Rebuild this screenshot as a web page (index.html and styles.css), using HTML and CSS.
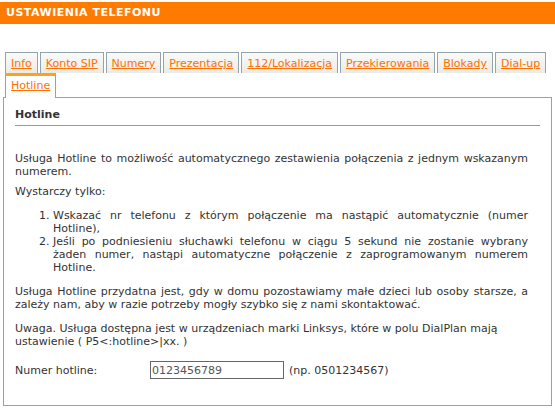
FILE: index.html
```html
<!DOCTYPE html>
<html lang="pl">

<head>
    <meta charset="utf-8">
    <title>Ustawienia telefonu</title>
    <link rel="stylesheet" href="styles.css">
</head>

<body>
    <header class="naglowek">USTAWIENIA TELEFONU</header>

    <nav class="zakladki">
        <a href="#" class="zakladka">Info</a>
        <a href="#" class="zakladka">Konto SIP</a>
        <a href="#" class="zakladka">Numery</a>
        <a href="#" class="zakladka">Prezentacja</a>
        <a href="#" class="zakladka">112/Lokalizacja</a>
        <a href="#" class="zakladka">Przekierowania</a>
        <a href="#" class="zakladka">Blokady</a>
        <a href="#" class="zakladka">Dial-up</a>
        <a href="#" class="zakladka aktywna">Hotline</a>
    </nav>

    <section class="panel">
        <h2 class="tytul">Hotline</h2>
        <div class="tresc">
            <p class="justuj wstep">Usługa Hotline to możliwość automatycznego zestawienia połączenia z jednym wskazanym numerem.</p>
            <p>Wystarczy tylko:</p>
            <ol class="kroki">
                <li>Wskazać nr telefonu z którym połączenie ma nastąpić automatycznie (numer Hotline),</li>
                <li>Jeśli po podniesieniu słuchawki telefonu w ciągu 5 sekund nie zostanie wybrany żaden numer, nastąpi automatyczne połączenie z zaprogramowanym numerem Hotline.</li>
            </ol>
            <p class="justuj">Usługa Hotline przydatna jest, gdy w domu pozostawiamy małe dzieci lub osoby starsze, a zależy nam, aby w razie potrzeby mogły szybko się z nami skontaktować.</p>
            <p>Uwaga. Usługa dostępna jest w urządzeniach marki Linksys, które w polu DialPlan mają ustawienie ( P5&lt;:hotline&gt;|xx. )</p>
            <form class="formularz">
                <label for="numer" class="etykieta">Numer hotline:</label>
                <input type="text" id="numer" class="pole" value="0123456789">
                <span class="przyklad">(np. 0501234567)</span>
            </form>
        </div>
    </section>
</body>

</html>
```

FILE: styles.css
```css
body {
    margin: 0;
    font-family: "DejaVu Sans", Verdana, sans-serif;
    font-size: 11px;
    line-height: 13px;
    color: #333;
    background: #fff;
}

.naglowek {
    margin-top: 2px;
    height: 22px;
    line-height: 22px;
    padding-left: 6px;
    background: #ff7b00;
    color: #fff;
    font-weight: bold;
    letter-spacing: 0.5px;
}

.zakladki {
    display: flex;
    flex-wrap: wrap;
    column-gap: 2px;
    width: 550px;
    margin: 28px 0 0 5px;
}

.zakladka {
    padding: 4px 5px 3px;
    border: 1px solid #94a4ac;
    border-bottom: none;
    background: linear-gradient(#fafaf8, #ebebe6);
    color: #ff7000;
}

.aktywna {
    position: relative;
    padding: 3px 5px 6px;
    margin-bottom: -1px;
    border-color: #a0a0a0;
    border-top: 3px solid #ffa020;
    background: #fff;
}

.panel {
    width: 547px;
    height: 307px;
    margin-left: 3px;
    border: 1px solid #a0a0a0;
}

.tytul {
    margin: 0 11px 0 11px;
    padding: 10px 0 4px;
    border-bottom: 1px solid #999;
    font-size: 11px;
}

.tresc {
    padding: 0 23px 0 11px;
}

.tresc p {
    margin: 0 0 11px;
}

.tresc .wstep {
    margin: 26px 0 7px;
}

.justuj {
    text-align: justify;
}

.kroki {
    margin: 0 0 11px;
    padding-left: 38px;
    text-align: justify;
}

.formularz {
    display: flex;
    align-items: center;
    margin-top: 13px;
}

.etykieta {
    width: 135px;
}

.pole {
    box-sizing: border-box;
    width: 134px;
    height: 18px;
    padding: 0 1px;
    border: 1px solid #666;
    font-family: "DejaVu Sans", Verdana, sans-serif;
    font-size: 11px;
    color: #555;
}

.przyklad {
    margin-left: 5px;
}
```
